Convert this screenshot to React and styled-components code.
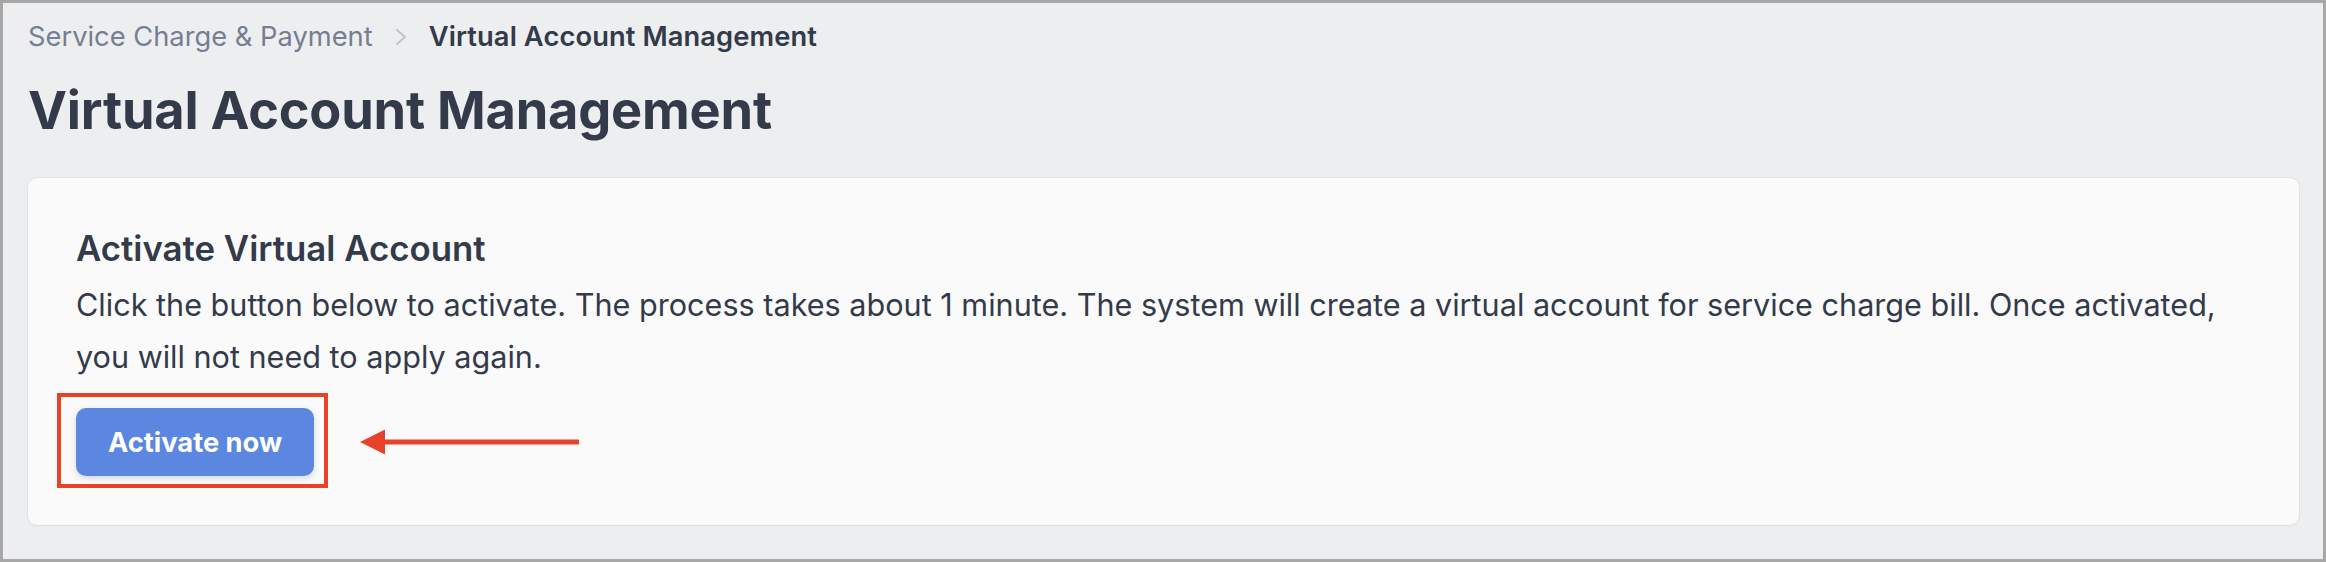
import React from 'react'
import styled, { createGlobalStyle } from 'styled-components'

const GlobalStyle = createGlobalStyle`
  html, body {
    margin: 0;
    padding: 0;
    background: #edeef0;
  }
  * {
    box-sizing: border-box;
  }
`

const Frame = styled.div`
  height: 562px;
  width: 2326px;
  border: 3px solid #a7a7a7;
  background: #edeef0;
  padding: 16px 24px 34px 25px;
  display: flex;
  flex-direction: column;
  font-family: Inter, "Noto Sans", sans-serif;
  color: #333a4a;
`

const Crumbs = styled.nav`
  display: flex;
  align-items: center;
  gap: 22px;
  height: 36px;
  font-size: 27.3px;
  line-height: 36px;
`

const Crumb = styled.span`
  color: ${(p) => (p.$current ? '#333a4a' : '#757e92')};
  font-weight: ${(p) => (p.$current ? 600 : 400)};
  letter-spacing: ${(p) => (p.$current ? '0.1px' : '0')};
`

const Title = styled.h1`
  margin: 23px 0 36px;
  font-size: 52.3px;
  line-height: 64px;
  font-weight: 700;
  letter-spacing: -0.2px;
`

const Card = styled.section`
  flex: 1;
  background: #fafafa;
  border-radius: 9px;
  box-shadow: 0 0 0 1px rgba(0, 0, 0, 0.035), 0 1px 3px rgba(0, 0, 0, 0.04);
  padding: 48px 48px 48px;
`

const CardTitle = styled.h2`
  margin: 0;
  font-size: 34.8px;
  line-height: 44px;
  font-weight: 600;
`

const Text = styled.p`
  margin: 9px 0 25px;
  font-size: 30.6px;
  line-height: 52px;
  font-weight: 400;
`

const ActionRow = styled.div`
  display: flex;
  align-items: center;
  gap: 46px;
`

const Highlight = styled.div`
  position: relative;
  &::after {
    content: '';
    position: absolute;
    left: -19px;
    right: -14px;
    top: -15px;
    bottom: -12px;
    border: 4.5px solid #e8432a;
    pointer-events: none;
  }
`

const Button = styled.button`
  height: 68px;
  padding: 0 32px;
  border: none;
  border-radius: 10px;
  background: #5b87e0;
  color: #fff;
  font-family: inherit;
  font-size: 27.3px;
  font-weight: 700;
  box-shadow: 0 2px 6px rgba(40, 60, 110, 0.18);
  cursor: pointer;
`

const Chevron = () => (
  <svg width="12" height="18" viewBox="0 0 12 18" fill="none">
    <polyline points="2,2 10,9 2,16" stroke="#bcc1cb" strokeWidth="1.8" strokeLinecap="round" strokeLinejoin="round" />
  </svg>
)

const Arrow = () => (
  <svg width="220" height="26" viewBox="0 0 220 26">
    <rect x="22" y="10.5" width="197" height="5" fill="#e8432a" />
    <polygon points="0,13 25,0.5 25,25.5" fill="#e8432a" />
  </svg>
)

export default function App() {
  return (
    <>
      <GlobalStyle />
      <Frame>
        <Crumbs>
          <Crumb>Service Charge &amp; Payment</Crumb>
          <Chevron />
          <Crumb $current>Virtual Account Management</Crumb>
        </Crumbs>
        <Title>Virtual Account Management</Title>
        <Card>
          <CardTitle>Activate Virtual Account</CardTitle>
          <Text>
            Click the button below to activate. The process takes about 1 minute. The system will create a virtual
            account for service charge bill. Once activated, you will not need to apply again.
          </Text>
          <ActionRow>
            <Highlight>
              <Button>Activate now</Button>
            </Highlight>
            <Arrow />
          </ActionRow>
        </Card>
      </Frame>
    </>
  )
}
